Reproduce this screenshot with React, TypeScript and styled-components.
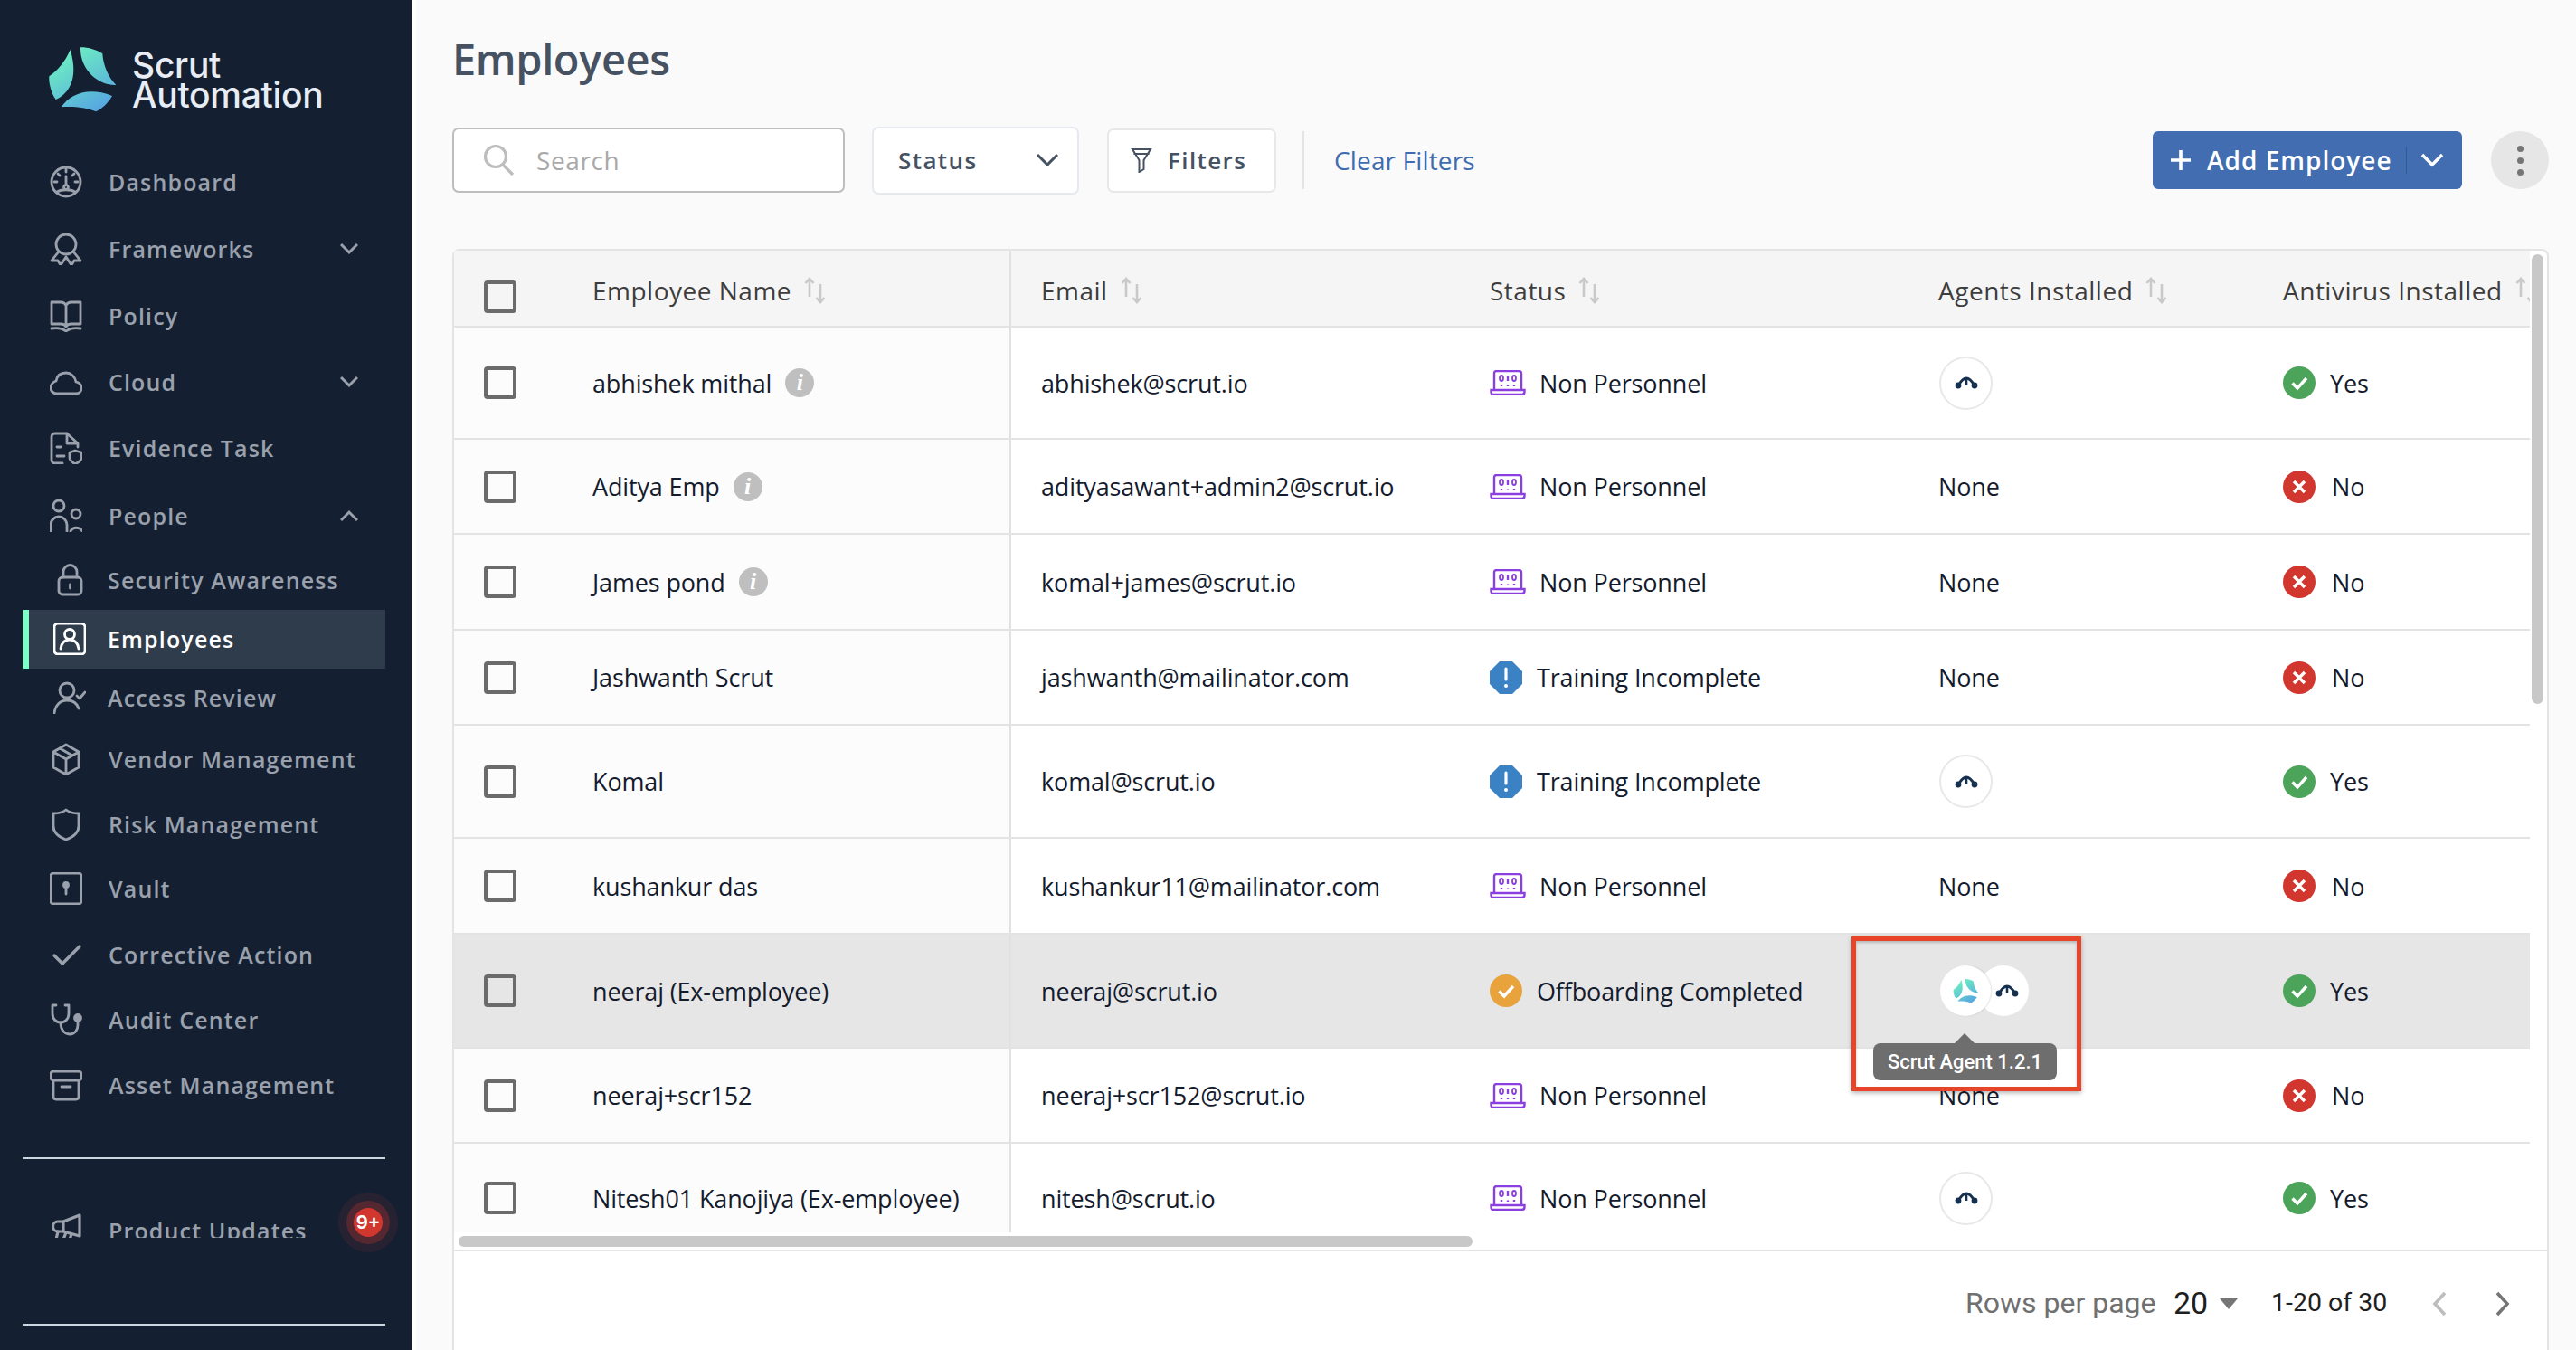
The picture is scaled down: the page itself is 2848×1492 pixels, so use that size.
import { ReactNode } from "react";
import styled, { createGlobalStyle } from "styled-components";

const GlobalStyle = createGlobalStyle`
  html, body { margin: 0; padding: 0; background: #fafafa; }
  *, *::before, *::after { box-sizing: border-box; }
  body { font-family: "Open Sans", sans-serif; }
`;

const Page = styled.div`
  display: flex;
  width: 2848px;
  height: 1492px;
  overflow: hidden;
`;

const Sidebar = styled.aside`
  position: relative;
  width: 455px;
  height: 100%;
  flex: none;
  background: #142032;
`;

const LogoRow = styled.div`
  position: absolute;
  left: 50px;
  top: 50px;
  display: flex;
  gap: 16px;
`;

const LogoText = styled.div`
  font-family: Inter, sans-serif;
  font-weight: 500;
  font-size: 39px;
  line-height: 33px;
  letter-spacing: -0.3px;
  color: #e8edf5;
  margin-top: 5px;
`;

const NavList = styled.nav`
  position: absolute;
  left: 0;
  right: 0;
  top: 181px;
  display: flex;
  flex-direction: column;
`;

const NavRow = styled.div<{ $gap: number; $active?: boolean }>`
  position: relative;
  display: flex;
  align-items: center;
  height: 40px;
  margin-top: ${(p) => p.$gap}px;
  padding-left: 55px;
  font-size: 25px;
  font-weight: 600;
  letter-spacing: 1.15px;
  white-space: nowrap;
  color: ${(p) => (p.$active ? "#ffffff" : "#9aa1ac")};
  z-index: 1;
  ${(p) =>
    p.$active &&
    `&::before {
      content: "";
      position: absolute;
      left: 25px;
      top: -12px;
      width: 401px;
      height: 65px;
      background: #2f3c4b;
      border-left: 7px solid #7dffc8;
      z-index: -1;
    }`}
`;

const NavIcon = styled.svg<{ $sub?: boolean }>`
  width: 36px;
  height: 36px;
  flex: none;
  margin-left: ${(p) => (p.$sub ? 4 : 0)}px;
  margin-right: ${(p) => (p.$sub ? 24 : 29)}px;
  fill: none;
  stroke: currentColor;
  stroke-width: 2.8;
  stroke-linecap: round;
  stroke-linejoin: round;
`;

const NavChevron = styled.svg`
  position: absolute;
  left: 376px;
  top: 13px;
  width: 20px;
  height: 14px;
  fill: none;
  stroke: #9aa1ac;
  stroke-width: 3;
`;

const Divider = styled.div<{ $top: number }>`
  position: absolute;
  left: 25px;
  top: ${(p) => p.$top}px;
  width: 401px;
  height: 2px;
  background: #cdd5df;
`;

const UpdatesRow = styled.div`
  position: absolute;
  left: 55px;
  top: 1330px;
  height: 38px;
  width: 300px;
  overflow: hidden;
  display: flex;
  font-size: 25px;
  font-weight: 600;
  letter-spacing: 1.15px;
  line-height: 60px;
  white-space: nowrap;
  color: #9aa1ac;
  svg { margin-top: 11px; }
`;

const Badge = styled.div`
  position: absolute;
  left: 391px;
  top: 1335px;
  width: 32px;
  height: 32px;
  border-radius: 50%;
  background: #d1372f;
  box-shadow: 0 0 0 8px rgba(209, 55, 47, 0.28), 0 0 0 17px rgba(209, 55, 47, 0.1);
  color: #fff;
  display: flex;
  align-items: center;
  justify-content: center;
  font-family: Inter, sans-serif;
  font-weight: 700;
  font-size: 20px;
`;

const Main = styled.main`
  position: relative;
  flex: 1;
  height: 100%;
  background: #fafafa;
  border-left: 5px solid #fff;
`;

const Title = styled.h1`
  position: absolute;
  left: 40px;
  top: 30px;
  margin: 0;
  font-size: 47px;
  line-height: 70px;
  font-weight: 600;
  letter-spacing: -0.4px;
  color: #465162;
`;

const Toolbar = styled.div`
  position: absolute;
  left: 40px;
  top: 139px;
  width: 2318px;
  height: 76px;
  display: flex;
  align-items: center;
`;

const SearchBox = styled.div`
  width: 434px;
  height: 72px;
  display: flex;
  align-items: center;
  padding-left: 32px;
  background: #fff;
  border: 2px solid #bdbdbd;
  border-radius: 7px;
  font-size: 28px;
  letter-spacing: 0.6px;
  color: #a9a9a9;
  svg { margin-right: 24px; }
`;

const SelectBox = styled.div`
  width: 229px;
  height: 75px;
  margin-left: 30px;
  display: flex;
  align-items: center;
  justify-content: space-between;
  padding: 0 20px 0 27px;
  background: #fff;
  border: 2px solid #e6eaef;
  border-radius: 7px;
  font-size: 26px;
  font-weight: 600;
  letter-spacing: 1.4px;
  color: #465162;
`;

const FilterButton = styled.div`
  width: 187px;
  height: 71px;
  margin-left: 31px;
  display: flex;
  align-items: center;
  gap: 17px;
  padding-left: 24px;
  background: #fff;
  border: 2px solid #e8e8e8;
  border-radius: 7px;
  font-size: 26px;
  font-weight: 600;
  letter-spacing: 1.4px;
  color: #465162;
`;

const ToolbarSep = styled.div`
  width: 2px;
  height: 64px;
  margin-left: 29px;
  background: #e4e4e4;
`;

const ClearLink = styled.a`
  margin-left: 33px;
  font-size: 28px;
  letter-spacing: 0.15px;
  color: #3f6cb0;
`;

const AddButton = styled.div`
  margin-left: auto;
  width: 342px;
  height: 64px;
  display: flex;
  align-items: center;
  padding-left: 20px;
  background: #426db0;
  border-radius: 6px;
  color: #fff;
  font-size: 28px;
  font-weight: 600;
  letter-spacing: 1px;
  white-space: nowrap;
`;

const AddLabel = styled.span`
  margin-left: 18px;
`;

const AddSep = styled.div`
  width: 1px;
  height: 30px;
  margin-left: 15px;
  margin-right: 15px;
  background: #34588f;
`;

const MoreButton = styled.div`
  width: 64px;
  height: 64px;
  margin-left: 32px;
  display: flex;
  flex-direction: column;
  align-items: center;
  justify-content: center;
  gap: 6px;
  border-radius: 50%;
  background: #e6e6e6;
  span {
    width: 7px;
    height: 7px;
    border-radius: 50%;
    background: #757575;
  }
`;

const Card = styled.section`
  position: absolute;
  left: 40px;
  top: 275px;
  width: 2318px;
  height: 1260px;
  background: #fff;
  border: 2px solid #e4e4e4;
  border-radius: 8px;
`;

const TableClip = styled.div`
  position: relative;
  width: 2295px;
  height: 1085px;
  overflow: hidden;
`;

const Row = styled.div<{ $h: number; $head?: boolean; $hover?: boolean }>`
  display: flex;
  align-items: stretch;
  height: ${(p) => p.$h}px;
  width: 2295px;
  flex: none;
  font-size: ${(p) => (p.$head ? 28 : 27)}px;
  font-weight: ${(p) => (p.$head ? 500 : 400)};
  letter-spacing: ${(p) => (p.$head ? 0.5 : -0.15)}px;
  color: ${(p) => (p.$head ? "#3d3d3d" : "#141b2d")};
  background: ${(p) => (p.$head ? "#f5f5f5" : p.$hover ? "#e6e6e6" : "#fff")};
  border-bottom: 2px solid #e3e3e3;
  white-space: nowrap;
`;

const FrozenCell = styled.div<{ $head?: boolean; $hover?: boolean }>`
  width: 616px;
  flex: none;
  display: flex;
  align-items: center;
  padding-left: 33px;
  background: ${(p) => (p.$head ? "#f5f5f5" : p.$hover ? "#e6e6e6" : "#fcfcfc")};
  border-right: 3px solid #e1e1e1;
`;

const Cell = styled.div<{ $w: number; $pad?: number }>`
  width: ${(p) => p.$w}px;
  padding-left: ${(p) => p.$pad ?? 0}px;
  flex: none;
  display: flex;
  align-items: center;
  min-width: 0;
`;

const HeadText = styled.span`
  display: flex;
  align-items: center;
  gap: 14px;
  margin-top: 5px;
`;

const CheckBox = styled.div<{ $head?: boolean }>`
  width: 36px;
  height: 36px;
  flex: none;
  margin-right: 84px;
  margin-top: ${(p) => (p.$head ? 18 : 0)}px;
  border: 4px solid #6b6b6b;
  border-radius: 4px;
`;

const InfoDot = styled.span`
  width: 32px;
  height: 32px;
  margin-left: 15px;
  flex: none;
  display: flex;
  align-items: center;
  justify-content: center;
  border-radius: 50%;
  background: #bfbfbf;
  color: #fff;
  font-family: "Liberation Serif", serif;
  font-style: italic;
  font-weight: 700;
  font-size: 26px;
`;

const StatusText = styled.span<{ $gap: number }>`
  margin-left: ${(p) => p.$gap}px;
`;

const AgentCircle = styled.div<{ $bare?: boolean; $overlap?: boolean }>`
  width: ${(p) => (p.$bare ? 56 : 59)}px;
  height: ${(p) => (p.$bare ? 56 : 59)}px;
  flex: none;
  display: flex;
  align-items: center;
  justify-content: center;
  border-radius: 50%;
  background: #fff;
  border: ${(p) => (p.$bare ? "none" : "2px solid #e8e8e8")};
  margin-left: ${(p) => (p.$overlap ? -14 : p.$bare ? 2 : 1)}px;
  padding-left: ${(p) => (p.$overlap ? 8 : 0)}px;
  box-shadow: ${(p) => (p.$overlap ? "none" : p.$bare ? "1px 0 2px rgba(0,0,0,.12)" : "none")};
  position: relative;
  z-index: ${(p) => (p.$overlap ? 0 : 1)};
`;

const ScrollThumbV = styled.div`
  position: absolute;
  left: 2297px;
  top: 4px;
  width: 13px;
  height: 497px;
  border-radius: 7px;
  background: #c8c8c8;
`;

const ScrollThumbH = styled.div`
  position: absolute;
  left: 5px;
  top: 1089px;
  width: 1121px;
  height: 12px;
  border-radius: 6px;
  background: #c8c8c8;
`;

const CardFooter = styled.div`
  position: absolute;
  left: 0;
  right: 0;
  top: 1104px;
  height: 120px;
  border-top: 2px solid #e4e4e4;
  font-family: Roboto, sans-serif;
`;

const FooterText = styled.span<{ $x: number; $muted?: boolean; $size: number }>`
  position: absolute;
  left: ${(p) => p.$x}px;
  top: 32px;
  line-height: 50px;
  font-size: ${(p) => p.$size}px;
  color: ${(p) => (p.$muted ? "#707070" : "#1f1f1f")};
`;

const FooterIcon = styled.svg<{ $x: number; $y: number }>`
  position: absolute;
  left: ${(p) => p.$x}px;
  top: ${(p) => p.$y}px;
`;

const Tooltip = styled.div`
  position: absolute;
  left: 1611px;
  top: 1153px;
  width: 203px;
  height: 41px;
  display: flex;
  align-items: center;
  justify-content: center;
  border-radius: 8px;
  background: #6e6e6e;
  color: #fff;
  font-family: Roboto, sans-serif;
  font-weight: 500;
  font-size: 22px;
  white-space: nowrap;
  z-index: 3;
  &::before {
    content: "";
    position: absolute;
    left: 90px;
    top: -11px;
    border-left: 11px solid transparent;
    border-right: 11px solid transparent;
    border-bottom: 11px solid #6e6e6e;
  }
`;

const RedBox = styled.div`
  position: absolute;
  left: 1587px;
  top: 1035px;
  width: 254px;
  height: 171px;
  border: 5px solid #e8442a;
  box-shadow: 0 2px 5px rgba(0, 0, 0, 0.3), inset 0 2px 3px rgba(0, 0, 0, 0.2);
  z-index: 4;
`;

const glyphs: Record<string, ReactNode> = {
  dashboard: (
    <>
      <circle cx="18" cy="18" r="16" />
      <path d="M5 18h3M28 18h3M18 4v3M9 9l2 2M27 9l-2 2M8 29c5-3 15-3 20 0M18 12v9" />
      <circle cx="18" cy="24" r="2.4" />
    </>
  ),
  frameworks: (
    <>
      <circle cx="18" cy="13" r="11" />
      <path d="M10 21 2 31h7l3 5 6-9 6 9 3-5h7l-8-10" />
    </>
  ),
  policy: (
    <>
      <path d="M2 3v24h10c3 0 5 1 6 3 1-2 3-3 6-3h10V3H24c-3 0-5 1-6 4-1-3-3-4-6-4zM18 7v23" />
      <path d="M2 32c6-1 12 0 16 3 4-3 10-4 16-3" />
    </>
  ),
  cloud: <path d="M8 31h21c4 0 6-3 6-6s-2-6-6-7c-1-6-6-10-11-10-6 0-10 3-11 9-3 1-6 4-6 8 0 3 3 6 7 6z" />,
  evidence: (
    <>
      <path d="M14 35H6q-4 0-4-4V6q0-4 4-4h13l12 11v4M19 2v11h12" />
      <path d="M8 17h4M8 27h8" />
      <path d="M22 23l6-2 7 2v6c0 3-3 5-7 7-3-2-6-4-6-7z" />
    </>
  ),
  people: (
    <>
      <circle cx="10" cy="7" r="6" />
      <path d="M1 35v-7a9 9 0 0 1 18 0v7" />
      <circle cx="29" cy="16" r="5" />
      <path d="M23 35a7 6 0 0 1 13 0" />
    </>
  ),
  lock: (
    <>
      <rect x="6" y="15" width="25" height="19" rx="4" />
      <path d="M11 15V9a7.500 7.500 0 0 1 15 0v6M18.500 23v4" />
    </>
  ),
  employees: (
    <>
      <rect x="1" y="1" width="34" height="34" rx="4" />
      <circle cx="18" cy="13" r="5.500" />
      <path d="M8 29c1-7 5-10 10-10s9 3 10 10" />
    </>
  ),
  access: (
    <>
      <circle cx="15" cy="10" r="8" />
      <path d="M1 35c1-9 7-14 14-14s11 3 13 9M26 16l3 3 6-7" />
    </>
  ),
  vendor: <path d="M18 2 32 10v17l-14 8-14-8V10zM4 10l14 8 14-8M18 18v17M11 6l14 8" />,
  risk: <path d="M18 2c4 3 9 4 14 4v14c0 7-6 12-14 15C10 32 4 27 4 20V6c5 0 10-1 14-4z" />,
  vault: (
    <>
      <rect x="1" y="1" width="34" height="34" rx="3" />
      <circle cx="18" cy="14" r="2.500" fill="currentColor" />
      <path d="M18 15v9" />
    </>
  ),
  check: <path d="M5 19l9 9L33 9" strokeWidth="3.4" />,
  audit: (
    <>
      <path d="M7 2H3v9c0 6 4 10 9 10s9-4 9-10V2h-4" />
      <path d="M12 21c0 8 4 13 10 13s9-5 9-10v-4" />
      <circle cx="31" cy="16" r="3.500" fill="currentColor" />
    </>
  ),
  asset: (
    <>
      <rect x="1" y="3" width="34" height="10" rx="3" />
      <path d="M4 13v18q0 3 3 3h22q3 0 3-3V13M13 20h10" />
    </>
  ),
  megaphone: (
    <>
      <path d="M33 2V25L15 20H9a5.500 5.500 0 0 1 0-11h6z" strokeWidth="3.2" />
      <path d="M15 9V20M9 20 7 29M18 21l-3 8M24 23l-2 6" strokeWidth="3.2" />
    </>
  ),
};

type NavEntry = { label: string; icon: string; gap: number; sub?: boolean; active?: boolean; open?: "up" | "down" };

const navItems: NavEntry[] = [
  { label: "Dashboard", icon: "dashboard", gap: 0 },
  { label: "Frameworks", icon: "frameworks", gap: 34, open: "down" },
  { label: "Policy", icon: "policy", gap: 34 },
  { label: "Cloud", icon: "cloud", gap: 33, open: "down" },
  { label: "Evidence Task", icon: "evidence", gap: 33 },
  { label: "People", icon: "people", gap: 35, open: "up" },
  { label: "Security Awareness", icon: "lock", gap: 31, sub: true },
  { label: "Employees", icon: "employees", gap: 25, sub: true, active: true },
  { label: "Access Review", icon: "access", gap: 25, sub: true },
  { label: "Vendor Management", icon: "vendor", gap: 28 },
  { label: "Risk Management", icon: "risk", gap: 32 },
  { label: "Vault", icon: "vault", gap: 31 },
  { label: "Corrective Action", icon: "check", gap: 33 },
  { label: "Audit Center", icon: "audit", gap: 32 },
  { label: "Asset Management", icon: "asset", gap: 32 },
];

function ScrutMark({ size }: { size: number }) {
  const id = `scrut-${size}`;
  return (
    <svg width={size} height={(size * 225) / 240} viewBox="60 60 240 225">
      <defs>
        <linearGradient id={id} gradientUnits="userSpaceOnUse" x1="110" y1="70" x2="240" y2="285">
          <stop offset="0" stopColor="#6ff5bf" />
          <stop offset="1" stopColor="#55a3e2" />
        </linearGradient>
      </defs>
      <g fill={`url(#${id})`}>
        <path d="M143 75C125 115 105 140 73 163C71 185 80 220 95 240C130 225 175 180 143 75Z" />
        <path d="M177 67C205 67 230 75 250 88C252 125 268 165 295 192C245 195 175 150 177 67Z" />
        <path d="M113 265C140 225 200 195 282 228C270 250 250 270 228 280C195 265 150 262 113 265Z" />
      </g>
    </svg>
  );
}

function AgentGlyph() {
  return (
    <svg width="26" height="16" viewBox="0 0 26 16" fill="none">
      <path d="M4 11C7 6 10 3 13 3C16 3 19 6 22 11" stroke="#16304f" strokeWidth="3" />
      <path d="M13 3V11" stroke="#16304f" strokeWidth="2.6" />
      <circle cx="4" cy="11" r="3.400" fill="#16304f" />
      <circle cx="22" cy="11" r="3.400" fill="#16304f" />
    </svg>
  );
}

function SortIcon() {
  return (
    <svg width="24" height="30" viewBox="0 0 24 30" fill="none" stroke="#c9c9c9" strokeWidth="2.6">
      <path d="M6 22V2M1.500 7 6 2l4.500 5" />
      <path d="M18 8v20M13.500 23l4.500 5 4.500-5" />
    </svg>
  );
}

function LaptopIcon() {
  return (
    <svg width="40" height="28" viewBox="0 0 40 28" fill="none" stroke="#8b3fe0" strokeWidth="2.4">
      <path d="M5 22V4Q5 1 8 1H32Q35 1 35 4V22" />
      <path d="M1.500 22H38.500V24Q38.500 27 35.500 27H4.500Q1.500 27 1.500 24Z" />
      <ellipse cx="13" cy="9" rx="2" ry="3" strokeWidth="1.800" />
      <path d="M20 6V12" />
      <ellipse cx="27" cy="9" rx="2" ry="3" strokeWidth="1.800" />
      <path d="M13 16V18M20 16.500V18M27 16V18" />
    </svg>
  );
}

function OctagonIcon() {
  return (
    <svg width="36" height="36" viewBox="0 0 36 36">
      <path d="M11 0H25L36 11V25L25 36H11L0 25V11Z" fill="#3a82c4" />
      <path d="M18 8V20" stroke="#fff" strokeWidth="3.200" strokeLinecap="round" />
      <circle cx="18" cy="27" r="2" fill="#fff" />
    </svg>
  );
}

function RoundCheck({ color, size }: { color: string; size: number }) {
  return (
    <svg width={size} height={size} viewBox="0 0 36 36">
      <circle cx="18" cy="18" r="18" fill={color} />
      <path d="M10.500 18.500 16 24 26 13" fill="none" stroke="#fff" strokeWidth="3.400" />
    </svg>
  );
}

function RoundCross() {
  return (
    <svg width="36" height="36" viewBox="0 0 36 36">
      <circle cx="18" cy="18" r="18" fill="#d1372f" />
      <path d="M12 12 24 24M24 12 12 24" fill="none" stroke="#fff" strokeWidth="3.400" />
    </svg>
  );
}

function Chevron({ w, color, sw }: { w: number; color: string; sw: number }) {
  return (
    <svg width={w} height={w * 0.62} viewBox="0 0 26 16" fill="none" stroke={color} strokeWidth={sw}>
      <path d="M2 2 13 13 24 2" />
    </svg>
  );
}

type Person = {
  name: string;
  info?: boolean;
  email: string;
  status: "non" | "training" | "off";
  agent: "none" | "one" | "both";
  av: boolean;
  h: number;
};

const people: Person[] = [
  { name: "abhishek mithal", info: true, email: "abhishek@scrut.io", status: "non", agent: "one", av: true, h: 124 },
  { name: "Aditya Emp", info: true, email: "adityasawant+admin2@scrut.io", status: "non", agent: "none", av: false, h: 105 },
  { name: "James pond", info: true, email: "komal+james@scrut.io", status: "non", agent: "none", av: false, h: 106 },
  { name: "Jashwanth Scrut", email: "jashwanth@mailinator.com", status: "training", agent: "none", av: false, h: 105 },
  { name: "Komal", email: "komal@scrut.io", status: "training", agent: "one", av: true, h: 125 },
  { name: "kushankur das", email: "kushankur11@mailinator.com", status: "non", agent: "none", av: false, h: 106 },
  { name: "neeraj (Ex-employee)", email: "neeraj@scrut.io", status: "off", agent: "both", av: true, h: 126 },
  { name: "neeraj+scr152", email: "neeraj+scr152@scrut.io", status: "non", agent: "none", av: false, h: 105 },
  { name: "Nitesh01 Kanojiya (Ex-employee)", email: "nitesh@scrut.io", status: "non", agent: "one", av: true, h: 122 },
];

function StatusCell({ status }: { status: Person["status"] }) {
  if (status === "non") {
    return (
      <>
        <LaptopIcon />
        <StatusText $gap={15}>Non Personnel</StatusText>
      </>
    );
  }
  if (status === "training") {
    return (
      <>
        <OctagonIcon />
        <StatusText $gap={16}>Training Incomplete</StatusText>
      </>
    );
  }
  return (
    <>
      <RoundCheck color="#e8a33d" size={36} />
      <StatusText $gap={16}>Offboarding Completed</StatusText>
    </>
  );
}

function App() {
  return (
    <Page>
      <GlobalStyle />
      <Sidebar>
        <LogoRow>
          <ScrutMark size={80} />
          <LogoText>
            Scrut
            <br />
            Automation
          </LogoText>
        </LogoRow>
        <NavList>
          {navItems.map((item) => (
            <NavRow key={item.label} $gap={item.gap} $active={item.active}>
              <NavIcon viewBox="0 0 36 36" $sub={item.sub}>
                {glyphs[item.icon]}
              </NavIcon>
              {item.label}
              {item.open && (
                <NavChevron viewBox="0 0 20 14">
                  <path d={item.open === "down" ? "M1 2l9 9 9-9" : "M1 12l9-9 9 9"} />
                </NavChevron>
              )}
            </NavRow>
          ))}
        </NavList>
        <Divider $top={1279} />
        <UpdatesRow>
          <NavIcon viewBox="0 0 36 36">{glyphs.megaphone}</NavIcon>
          Product Updates
        </UpdatesRow>
        <Badge>9+</Badge>
        <Divider $top={1463} />
      </Sidebar>
      <Main>
        <Title>Employees</Title>
        <Toolbar>
          <SearchBox>
            <svg width="35" height="36" viewBox="0 0 35 36" fill="none" stroke="#bdbdbd" strokeWidth="3.200">
              <circle cx="14" cy="14" r="11.500" />
              <path d="M22 23 33 34" />
            </svg>
            Search
          </SearchBox>
          <SelectBox>
            Status
            <Chevron w={26} color="#465162" sw={3} />
          </SelectBox>
          <FilterButton>
            <svg width="24" height="28" viewBox="0 0 24 28" fill="none" stroke="#465162" strokeWidth="2">
              <path d="M2 2H22L14.500 14V24L9.500 27V14Z" />
              <path d="M3.500 7H20.500" />
            </svg>
            Filters
          </FilterButton>
          <ToolbarSep />
          <ClearLink>Clear Filters</ClearLink>
          <AddButton>
            <svg width="22" height="22" viewBox="0 0 22 22" stroke="#fff" strokeWidth="3.600">
              <path d="M11 0V22M0 11H22" />
            </svg>
            <AddLabel>Add Employee</AddLabel>
            <AddSep />
            <Chevron w={26} color="#fff" sw={3.400} />
          </AddButton>
          <MoreButton>
            <span />
            <span />
            <span />
          </MoreButton>
        </Toolbar>
        <Card>
          <TableClip>
            <Row $h={85} $head>
              <FrozenCell $head>
                <CheckBox $head />
                <HeadText>
                  Employee Name
                  <SortIcon />
                </HeadText>
              </FrozenCell>
              <Cell $w={529} $pad={33}>
                <HeadText>
                  Email
                  <SortIcon />
                </HeadText>
              </Cell>
              <Cell $w={496}>
                <HeadText>
                  Status
                  <SortIcon />
                </HeadText>
              </Cell>
              <Cell $w={381}>
                <HeadText>
                  Agents Installed
                  <SortIcon />
                </HeadText>
              </Cell>
              <Cell $w={400}>
                <HeadText>
                  Antivirus Installed
                  <SortIcon />
                </HeadText>
              </Cell>
            </Row>
            {people.map((p) => {
              const hover = p.agent === "both";
              return (
                <Row key={p.name} $h={p.h} $hover={hover}>
                  <FrozenCell $hover={hover}>
                    <CheckBox />
                    {p.name}
                    {p.info && <InfoDot>i</InfoDot>}
                  </FrozenCell>
                  <Cell $w={529} $pad={33}>
                    {p.email}
                  </Cell>
                  <Cell $w={496}>
                    <StatusCell status={p.status} />
                  </Cell>
                  <Cell $w={381}>
                    {p.agent === "none" && "None"}
                    {p.agent === "one" && (
                      <AgentCircle>
                        <AgentGlyph />
                      </AgentCircle>
                    )}
                    {p.agent === "both" && (
                      <>
                        <AgentCircle $bare>
                          <ScrutMark size={30} />
                        </AgentCircle>
                        <AgentCircle $bare $overlap>
                          <AgentGlyph />
                        </AgentCircle>
                      </>
                    )}
                  </Cell>
                  <Cell $w={400}>
                    {p.av ? <RoundCheck color="#4ca45a" size={36} /> : <RoundCross />}
                    <StatusText $gap={p.av ? 16 : 18}>{p.av ? "Yes" : "No"}</StatusText>
                  </Cell>
                </Row>
              );
            })}
          </TableClip>
          <ScrollThumbV />
          <ScrollThumbH />
          <CardFooter>
            <FooterText $x={1671} $size={32} $muted>
              Rows per page
            </FooterText>
            <FooterText $x={1901} $size={34}>
              20
            </FooterText>
            <FooterIcon $x={1952} $y={52} width="20" height="12" viewBox="0 0 20 12">
              <path d="M0 0H20L10 12Z" fill="#757575" />
            </FooterIcon>
            <FooterText $x={2009} $size={28.5}>
              1-20 of 30
            </FooterText>
            <FooterIcon $x={2186} $y={44} width="18" height="28" viewBox="0 0 18 28" fill="none" stroke="#bdbdbd" strokeWidth="3.600">
              <path d="M15 2 4 14 15 26" />
            </FooterIcon>
            <FooterIcon $x={2256} $y={44} width="18" height="28" viewBox="0 0 18 28" fill="none" stroke="#757575" strokeWidth="3.600">
              <path d="M3 2 14 14 3 26" />
            </FooterIcon>
          </CardFooter>
        </Card>
        <RedBox />
        <Tooltip>Scrut Agent 1.2.1</Tooltip>
      </Main>
    </Page>
  );
}

export default App;
